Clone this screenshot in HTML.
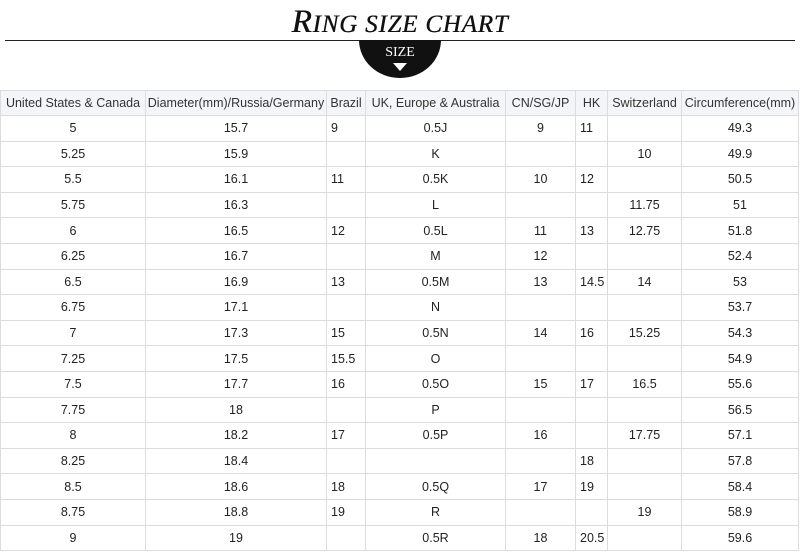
<!DOCTYPE html>
<html><head><meta charset="utf-8"><style>
body{margin:0;width:800px;height:560px;background:#fff;position:relative;overflow:hidden;font-family:"Liberation Sans",Arial,sans-serif;}
.title{position:absolute;left:0;width:800px;top:4px;text-align:center;font-family:"Liberation Serif",serif;font-style:italic;font-size:25px;color:#111;letter-spacing:0.8px;text-shadow:0.4px 0 0 #111;}
.title b{font-size:33px;font-weight:normal;}
.line{position:absolute;left:5px;right:5px;top:40px;height:1px;background:#222;}
.semi{position:absolute;left:359px;top:40px;width:82px;height:38px;background:#111;border-radius:0 0 41px 41px/0 0 38px 38px;}
.semi span{position:absolute;left:0;width:82px;top:5px;text-align:center;color:#fff;font-family:"Liberation Serif",serif;font-size:14px;}
.tri{position:absolute;left:34px;top:23px;width:0;height:0;border-left:7px solid transparent;border-right:7px solid transparent;border-top:8px solid #fff;}
table{position:absolute;left:0;top:90px;border-collapse:collapse;table-layout:fixed;width:798px;font-size:12.5px;color:#222;}
td{border:1px solid #dcdcdc;height:24.6px;padding:0;text-align:center;white-space:nowrap;overflow:hidden;}
tr.h td{height:24px;background:#f4f5f8;color:#333;}
td.l{text-align:left;padding-left:4px;}
</style></head><body>
<div class="title"><b>R</b>ING SIZE CHART</div>
<div class="line"></div>
<div class="semi"><span>SIZE</span><div class="tri"></div></div>
<table>
<colgroup><col style="width:145px"><col style="width:181px"><col style="width:39px"><col style="width:140px"><col style="width:70px"><col style="width:32px"><col style="width:74px"><col style="width:117px"></colgroup>
<tr class="h"><td>United States &amp; Canada</td><td>Diameter(mm)/Russia/Germany</td><td>Brazil</td><td>UK, Europe &amp; Australia</td><td>CN/SG/JP</td><td>HK</td><td>Switzerland</td><td>Circumference(mm)</td></tr>
<tr><td>5</td><td>15.7</td><td class="l">9</td><td>0.5J</td><td>9</td><td class="l">11</td><td></td><td>49.3</td></tr>
<tr><td>5.25</td><td>15.9</td><td class="l"></td><td>K</td><td></td><td class="l"></td><td>10</td><td>49.9</td></tr>
<tr><td>5.5</td><td>16.1</td><td class="l">11</td><td>0.5K</td><td>10</td><td class="l">12</td><td></td><td>50.5</td></tr>
<tr><td>5.75</td><td>16.3</td><td class="l"></td><td>L</td><td></td><td class="l"></td><td>11.75</td><td>51</td></tr>
<tr><td>6</td><td>16.5</td><td class="l">12</td><td>0.5L</td><td>11</td><td class="l">13</td><td>12.75</td><td>51.8</td></tr>
<tr><td>6.25</td><td>16.7</td><td class="l"></td><td>M</td><td>12</td><td class="l"></td><td></td><td>52.4</td></tr>
<tr><td>6.5</td><td>16.9</td><td class="l">13</td><td>0.5M</td><td>13</td><td class="l">14.5</td><td>14</td><td>53</td></tr>
<tr><td>6.75</td><td>17.1</td><td class="l"></td><td>N</td><td></td><td class="l"></td><td></td><td>53.7</td></tr>
<tr><td>7</td><td>17.3</td><td class="l">15</td><td>0.5N</td><td>14</td><td class="l">16</td><td>15.25</td><td>54.3</td></tr>
<tr><td>7.25</td><td>17.5</td><td class="l">15.5</td><td>O</td><td></td><td class="l"></td><td></td><td>54.9</td></tr>
<tr><td>7.5</td><td>17.7</td><td class="l">16</td><td>0.5O</td><td>15</td><td class="l">17</td><td>16.5</td><td>55.6</td></tr>
<tr><td>7.75</td><td>18</td><td class="l"></td><td>P</td><td></td><td class="l"></td><td></td><td>56.5</td></tr>
<tr><td>8</td><td>18.2</td><td class="l">17</td><td>0.5P</td><td>16</td><td class="l"></td><td>17.75</td><td>57.1</td></tr>
<tr><td>8.25</td><td>18.4</td><td class="l"></td><td></td><td></td><td class="l">18</td><td></td><td>57.8</td></tr>
<tr><td>8.5</td><td>18.6</td><td class="l">18</td><td>0.5Q</td><td>17</td><td class="l">19</td><td></td><td>58.4</td></tr>
<tr><td>8.75</td><td>18.8</td><td class="l">19</td><td>R</td><td></td><td class="l"></td><td>19</td><td>58.9</td></tr>
<tr><td>9</td><td>19</td><td class="l"></td><td>0.5R</td><td>18</td><td class="l">20.5</td><td></td><td>59.6</td></tr>
</table>
</body></html>
